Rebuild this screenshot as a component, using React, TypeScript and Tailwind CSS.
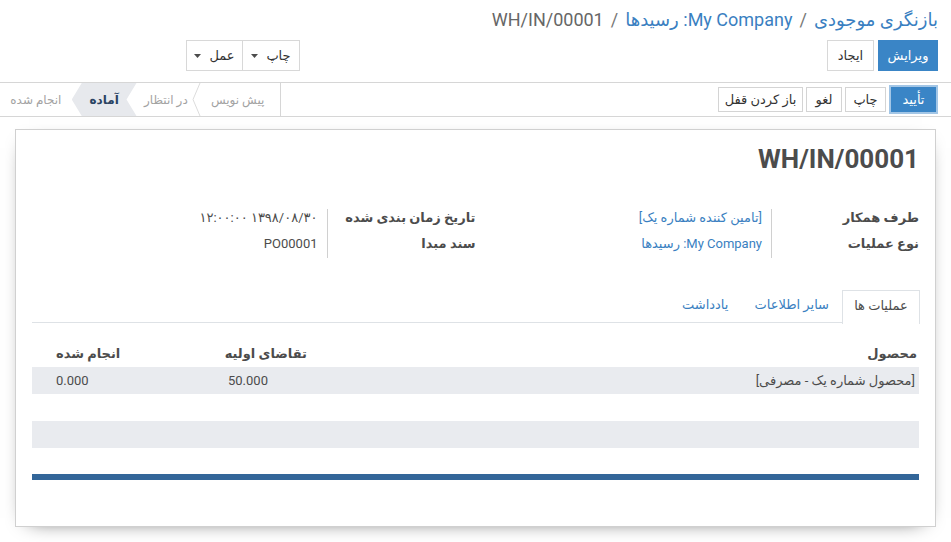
import React from 'react';

const Caret = () => (
  <svg width="7" height="4" viewBox="0 0 7 4" className="inline-block">
    <path d="M0 0 L7 0 L3.5 4 Z" fill="#4c4c4c" />
  </svg>
);

const steps = [
  { label: 'پیش نویس', w: 'w-[85px]' },
  { label: 'در انتظار', w: 'w-[59px]' },
  { label: 'آماده', w: 'w-[65px]', active: true },
  { label: 'انجام شده', w: 'w-[72px]' },
];

const App = () => {
  return (
    <div
      dir="rtl"
      className="w-[951px] h-[542px] bg-white overflow-hidden text-[13px] text-[#4c4c4c] font-['Roboto','DejaVu_Sans',sans-serif]"
    >
      {/* control panel */}
      <div className="px-[13px] pt-[8px]">
        <ol className="flex items-center gap-[7px] text-[18px] leading-[24px]">
          <li className="text-[#3a7fc1]">بازنگری موجودی</li>
          <li className="text-[#777]">/</li>
          <li className="text-[#3a7fc1]">My Company: رسیدها</li>
          <li className="text-[#777]">/</li>
          <li className="text-[#666]">WH/IN/00001</li>
        </ol>
        <div className="flex items-center h-[31px] mt-[8px]">
          <div className="flex gap-[4px]">
            <button className="w-[60px] h-[31px] bg-[#3a85c6] text-white border border-[#3a85c6]">ویرایش</button>
            <button className="w-[47px] h-[31px] bg-white text-[#333] border border-[#d8d8d8]">ایجاد</button>
          </div>
          <div className="flex mr-[527px] border border-[#d8d8d8] h-[31px]">
            <button className="w-[57px] flex items-center justify-center gap-[8px] text-[#333] border-l border-[#d8d8d8]">
              چاپ <Caret />
            </button>
            <button className="w-[55px] flex items-center justify-center gap-[8px] text-[#333]">
              عمل <Caret />
            </button>
          </div>
        </div>
      </div>

      {/* status bar */}
      <div className="mt-[11px] h-[35px] border-y border-[#d6d6d6] flex items-center justify-between pr-[13px]">
        <div className="flex items-center gap-[3px]">
          <button className="w-[49px] h-[29px] bg-[#3a85c6] text-white border-2 border-[#a3c6e6]">تأیید</button>
          <button className="w-[41px] h-[25px] bg-white text-[#333] border border-[#d4d4d4]">چاپ</button>
          <button className="w-[36px] h-[25px] bg-white text-[#333] border border-[#d4d4d4]">لغو</button>
          <button className="w-[85px] h-[25px] bg-white text-[#333] border border-[#d4d4d4]">باز کردن قفل</button>
        </div>
        <div className="flex self-stretch w-[281px] border-r border-[#d6d6d6] text-[12px]">
          {steps.map((s, i) => (
            <div key={s.label} className={`relative flex items-center justify-center ${s.w}`}>
              {s.active && (
                <div className="absolute inset-0 bg-[#e7e9ed] [clip-path:polygon(0_50%,10px_0,100%_0,calc(100%_-_10px)_50%,100%_100%,10px_100%)]" />
              )}
              <span className={`relative ${s.active ? 'font-bold text-[#2b4463]' : 'text-[#a3a3a3]'}`}>{s.label}</span>
              {i === 0 && (
                <svg className="absolute left-[-4px] top-0" width="10" height="33" viewBox="0 0 10 33">
                  <polyline points="9,0 2,16.5 9,33" fill="none" stroke="#dcdcdc" strokeWidth="1" />
                </svg>
              )}
            </div>
          ))}
        </div>
      </div>

      {/* sheet */}
      <div className="mx-[15px] mt-[12px] h-[398px] border border-[#d0d0d0] bg-white px-[16px] pt-[13px] shadow-[0_5px_20px_-14px_black]">
        <h1 className="text-[26px] leading-[32px] font-bold text-[#4c4c4c]">WH/IN/00001</h1>

        <div className="flex mt-[34px]">
          <div className="w-1/2 flex">
            <div className="w-[148px] border-l border-[#d0d0d0] font-bold">
              <div className="h-[24.5px] flex items-center pb-[7px]">طرف همکار</div>
              <div className="h-[24.5px] flex items-center pb-[5px]">نوع عملیات</div>
            </div>
            <div className="pr-[9px] text-[#3a7fc1]">
              <div className="h-[24.5px] flex items-center pb-[7px]">[تامین کننده شماره یک]</div>
              <div className="h-[24.5px] flex items-center pb-[5px]">My Company: رسیدها</div>
            </div>
          </div>
          <div className="w-1/2 flex">
            <div className="w-[149px] border-l border-[#d0d0d0] font-bold">
              <div className="h-[24.5px] flex items-center pb-[7px]">تاریخ زمان بندی شده</div>
              <div className="h-[24.5px] flex items-center pb-[5px]">سند مبدا</div>
            </div>
            <div className="pr-[9px]">
              <div className="h-[24.5px] flex items-center pb-[7px]">۱۳۹۸/۰۸/۳۰ ۱۲:۰۰:۰۰</div>
              <div className="h-[24.5px] flex items-center pb-[5px]">PO00001</div>
            </div>
          </div>
        </div>

        {/* tabs */}
        <div className="flex mt-[32px] border-b border-[#dee2e6] h-[33px]">
          <div className="w-[78px] -ml-px -mr-px h-[34px] pb-[3px] border border-b-0 border-[#dee2e6] bg-white flex items-center justify-center">
            عملیات ها
          </div>
          <div className="px-[14px] pb-[3px] flex items-center text-[#3a7fc1]">سایر اطلاعات</div>
          <div className="px-[12px] pb-[3px] flex items-center text-[#3a7fc1]">یادداشت</div>
        </div>

        {/* lines table */}
        <div className="mt-[17px]">
          <div className="grid grid-cols-[608px_87px_94px_78px_20px] h-[27px] items-center font-bold">
            <div className="pr-[2px]">محصول</div>
            <div className="pr-[4px]">تقاضای اولیه</div>
            <div />
            <div className="text-left pl-[4px]">انجام شده</div>
            <div />
          </div>
          <div className="grid grid-cols-[608px_87px_94px_78px_20px] h-[27px] items-center bg-[#e9ebef]">
            <div className="pr-[4px]">[محصول شماره یک - مصرفی]</div>
            <div className="text-left pl-[4px]">50.000</div>
            <div />
            <div className="text-left pl-[4px]">0.000</div>
            <div />
          </div>
          <div className="h-[27px]" />
          <div className="h-[27px] bg-[#e9ebef]" />
          <div className="h-[26px]" />
          <div className="h-[6px] bg-[#336699]" />
        </div>
      </div>
    </div>
  );
};

export default App;
